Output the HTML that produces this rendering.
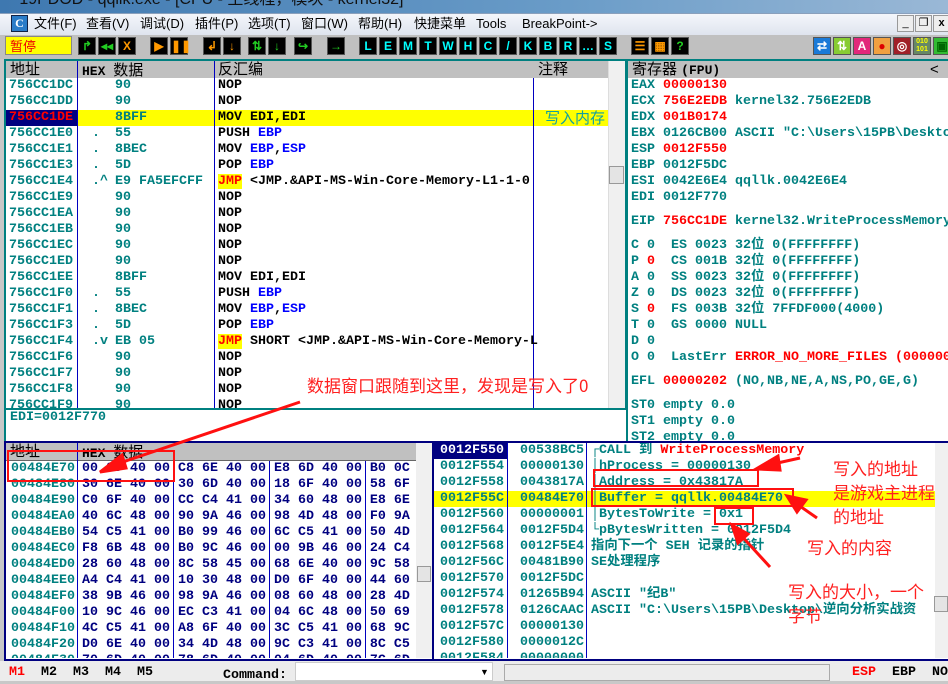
<!DOCTYPE html>
<html><head><meta charset="utf-8"><style>
*{margin:0;padding:0;box-sizing:border-box}
body{width:948px;height:681px;overflow:hidden;background:#c8c8c8;position:relative;font-family:"Liberation Sans","Noto Sans CJK SC",sans-serif}
.a{position:absolute}
pre,.m{font:bold 13.33px/16px "Liberation Mono","Noto Sans CJK SC",monospace;position:absolute;white-space:pre;margin:0}
.t{color:#008080}.r{color:#ff0000}.k{color:#000}.b{color:#0000ff}.n{color:#000080}
.hd{background:#c0c0c0;font:15px/17px "Liberation Sans","Noto Sans CJK SC",sans-serif;color:#000}
.btn{position:absolute;top:37px;width:18px;height:18px;background:#000;border:1px solid #555;color:#0ff;font:bold 12px/16px "Liberation Sans",sans-serif;text-align:center}
.vl{position:absolute;width:1px;background:#0000c0}
.ann{position:absolute;color:#ff2020;font:17px/20px "Noto Sans CJK SC",sans-serif;white-space:nowrap}
.box{position:absolute;border:2px solid #ff1010}
.hx{position:absolute;font:bold 13px/17px 'Liberation Mono','Noto Sans CJK SC',monospace}
.hx span{font:normal 15px/17px 'Noto Sans CJK SC',sans-serif}
</style></head><body>
<div class="a" style="left:0;top:0;width:948px;height:13px;background:linear-gradient(90deg,#3e78b0,#6a9cc8 60%,#9ab8d6);overflow:hidden"><div class="a" style="left:6px;top:-9px;color:#111;font:16px/18px 'Liberation Sans','Noto Sans CJK SC',sans-serif;white-space:nowrap">&nbsp;&nbsp;&nbsp;19PDOD - qqllk.exe - [CPU - 主线程，模块 - kernel32]</div></div>
<div class="a" style="left:0;top:13px;width:948px;height:22px;background:linear-gradient(#f4f6fb,#dfe4ee);border-top:1px solid #8aa0bc"></div>
<div class="a" style="left:11px;top:15px;width:17px;height:17px;background:#2a7cc8;border:1px solid #124;color:#fff;font:bold 12px/15px 'Liberation Serif',serif;text-align:center">C</div>
<div class="a" style="left:34px;top:15px;font:13px/18px 'Liberation Sans','Noto Sans CJK SC',sans-serif;color:#000;white-space:nowrap">
<span class="a" style="left:0">文件(F)</span><span class="a" style="left:52px">查看(V)</span><span class="a" style="left:106px">调试(D)</span><span class="a" style="left:161px">插件(P)</span><span class="a" style="left:214px">选项(T)</span><span class="a" style="left:267px">窗口(W)</span><span class="a" style="left:324px">帮助(H)</span><span class="a" style="left:380px">快捷菜单</span><span class="a" style="left:442px">Tools</span><span class="a" style="left:488px">BreakPoint-&gt;</span></div>
<div class="a" style="left:897px;top:15px;width:17px;height:17px;border:1px solid #999;background:#eee;font:11px/15px sans-serif;text-align:center">_</div>
<div class="a" style="left:915px;top:15px;width:17px;height:17px;border:1px solid #999;background:#eee;font:11px/15px sans-serif;text-align:center">❐</div>
<div class="a" style="left:933px;top:15px;width:17px;height:17px;border:1px solid #999;background:#eee;font:bold 11px/15px sans-serif;text-align:center">x</div>
<div class="a" style="left:0;top:35px;width:948px;height:24px;background:#c0c0c0"></div>
<div class="a" style="left:5px;top:36px;width:67px;height:19px;background:#ffff00;border:1px solid #888;color:#e00;font:13px/17px 'Noto Sans CJK SC',sans-serif;padding-left:4px">暂停</div>
<div class="btn" style="left:78px;color:#2c2">↱</div><div class="btn" style="left:98px;color:#2c2">◂◂</div><div class="btn" style="left:118px;color:#f90">X</div>
<div class="btn" style="left:150px;color:#f90">▶</div><div class="btn" style="left:170px;color:#f90">❚❚</div>
<div class="btn" style="left:203px;color:#f90">↲</div><div class="btn" style="left:223px;color:#f90">↓</div>
<div class="btn" style="left:248px;color:#2c2">⇅</div><div class="btn" style="left:268px;color:#2c2">↓</div>
<div class="btn" style="left:294px;color:#2c2">↪</div><div class="btn" style="left:327px;color:#2c2">→</div>
<div class="btn" style="left:359px">L</div><div class="btn" style="left:379px">E</div><div class="btn" style="left:399px">M</div><div class="btn" style="left:419px">T</div><div class="btn" style="left:439px">W</div><div class="btn" style="left:459px">H</div><div class="btn" style="left:479px">C</div><div class="btn" style="left:499px">/</div><div class="btn" style="left:519px">K</div><div class="btn" style="left:539px">B</div><div class="btn" style="left:559px">R</div><div class="btn" style="left:579px">…</div><div class="btn" style="left:599px">S</div>
<div class="btn" style="left:631px;color:#f90">☰</div><div class="btn" style="left:651px;color:#f90">▦</div><div class="btn" style="left:671px;color:#2c2">?</div>
<div class="btn" style="left:813px;background:#1a7ad8;color:#fff">⇄</div><div class="btn" style="left:833px;background:#8c3;color:#fff">⇅</div><div class="btn" style="left:853px;background:#e2287a;color:#fff">A</div><div class="btn" style="left:873px;background:#f0a040;color:#d00">●</div><div class="btn" style="left:893px;background:#a02028;color:#fff">◎</div><div class="btn" style="left:913px;background:#686;color:#ff0;font-size:7px;line-height:8px">010<br>101</div><div class="btn" style="left:933px;background:#3b3;color:#060">▣</div>

<div class="a" style="left:4px;top:59px;width:623px;height:351px;background:#fff;border:2px solid #008080;border-bottom:none"></div>
<div class="a hd" style="left:6px;top:61px;width:602px;height:17px"></div>
<div class="a hd" style="left:10px;top:61px">地址</div>
<div class="hx" style="left:82px;top:61px">HEX <span>数据</span></div>
<div class="a hd" style="left:218px;top:61px">反汇编</div>
<div class="a hd" style="left:538px;top:61px">注释</div>
<div class="a" style="left:608px;top:61px;width:17px;height:348px;background:#f0f0f0;border-left:1px solid #ddd"></div>
<div class="a" style="left:609px;top:166px;width:15px;height:18px;background:#e4e4e4;border:1px solid #999"></div>
<div class="a" style="left:6px;top:110px;width:602px;height:16px;background:#ffff00"></div>
<div class="a" style="left:6px;top:110px;width:71px;height:16px;background:#000080"></div>
<div class="vl" style="left:77px;top:61px;height:348px"></div>
<div class="vl" style="left:214px;top:61px;height:348px"></div>
<div class="vl" style="left:533px;top:78px;height:331px"></div>
<div class="a" style="left:6px;top:78px;width:602px;height:331px;overflow:hidden">
<pre class="t" style="left:3px;top:0">756CC1DC
756CC1DD
<span class="r">756CC1DE</span>
756CC1E0
756CC1E1
756CC1E3
756CC1E4
756CC1E9
756CC1EA
756CC1EB
756CC1EC
756CC1ED
756CC1EE
756CC1F0
756CC1F1
756CC1F3
756CC1F4
756CC1F6
756CC1F7
756CC1F8
756CC1F9</pre>
<pre class="t" style="left:86px;top:0"> 
 
 
.
.
.
.^
 
 
 
 
 
 
.
.
.
.v</pre>
<pre class="t" style="left:109px;top:0">90
90
8BFF
55
8BEC
5D
E9 FA5EFCFF
90
90
90
90
90
8BFF
55
8BEC
5D
EB 05
90
90
90
90</pre>
<pre class="k" style="left:212px;top:0">NOP
NOP
MOV EDI,EDI
PUSH <span class="b">EBP</span>
MOV <span class="b">EBP</span>,<span class="b">ESP</span>
POP <span class="b">EBP</span>
<span class="r" style="background:#ff0">JMP</span> &lt;JMP.&amp;API-MS-Win-Core-Memory-L1-1-0
NOP
NOP
NOP
NOP
NOP
MOV EDI,EDI
PUSH <span class="b">EBP</span>
MOV <span class="b">EBP</span>,<span class="b">ESP</span>
POP <span class="b">EBP</span>
<span class="r" style="background:#ff0">JMP</span> SHORT &lt;JMP.&amp;API-MS-Win-Core-Memory-L
NOP
NOP
NOP
NOP</pre>
<div class="a" style="left:539px;top:32px;color:#10a0a0;font:15px/16px 'Noto Sans CJK SC',sans-serif;white-space:nowrap">写入内存</div>
</div>

<div class="a" style="left:626px;top:59px;width:322px;height:382px;background:#fff;border-left:2px solid #008080;border-top:2px solid #008080"></div>
<div class="a hd" style="left:628px;top:61px;width:320px;height:17px;padding-left:4px">寄存器 <span style="font:bold 13px 'Liberation Mono',monospace">(FPU)</span><span class="a" style="left:302px;top:0">&lt;</span></div>
<div class="a" style="left:628px;top:78px;width:320px;height:363px;overflow:hidden">
<pre class="t" style="left:3px;top:0">EAX <span class="r">00000130</span>
ECX <span class="r">756E2EDB</span> kernel32.756E2EDB
EDX <span class="r">001B0174</span>
EBX 0126CB00 ASCII "C:\Users\15PB\Desktop
ESP <span class="r">0012F550</span>
EBP 0012F5DC
ESI 0042E6E4 qqllk.0042E6E4
EDI 0012F770</pre>
<pre class="t" style="left:3px;top:136px">EIP <span class="r">756CC1DE</span> kernel32.WriteProcessMemory</pre>
<pre class="t" style="left:3px;top:160px">C 0  ES 0023 32位 0(FFFFFFFF)
P <span class="r">0</span>  CS 001B 32位 0(FFFFFFFF)
A 0  SS 0023 32位 0(FFFFFFFF)
Z 0  DS 0023 32位 0(FFFFFFFF)
S <span class="r">0</span>  FS 003B 32位 7FFDF000(4000)
T 0  GS 0000 NULL
D 0
O 0  LastErr <span class="r">ERROR_NO_MORE_FILES (00000012)</span></pre>
<pre class="t" style="left:3px;top:296px">EFL <span class="r">00000202</span> (NO,NB,NE,A,NS,PO,GE,G)</pre>
<pre class="t" style="left:3px;top:320px">ST0 empty 0.0
ST1 empty 0.0
ST2 empty 0.0</pre>
</div>

<div class="a" style="left:4px;top:408px;width:622px;height:33px;background:#fff;border-left:2px solid #008080;border-top:2px solid #008080"></div>
<pre class="t" style="left:10px;top:410px">EDI=0012F770</pre>

<div class="a" style="left:4px;top:441px;width:430px;height:220px;background:#fff;border:2px solid #000080"></div>
<div class="a hd" style="left:6px;top:443px;width:410px;height:18px;border-bottom:1px solid #666"></div>
<div class="a hd" style="left:10px;top:443px">地址</div>
<div class="hx" style="left:82px;top:443px">HEX <span>数据</span></div>
<div class="a" style="left:416px;top:443px;width:16px;height:215px;background:#f0f0f0"></div>
<div class="a" style="left:417px;top:566px;width:14px;height:16px;background:#e4e4e4;border:1px solid #999"></div>
<div class="vl" style="left:77px;top:443px;height:215px"></div>
<div class="vl" style="left:173px;top:461px;height:197px"></div>
<div class="vl" style="left:269px;top:461px;height:197px"></div>
<div class="vl" style="left:365px;top:461px;height:197px"></div>
<div class="a" style="left:6px;top:461px;width:410px;height:197px;overflow:hidden">
<pre class="t" style="left:5px;top:0">00484E70
00484E80
00484E90
00484EA0
00484EB0
00484EC0
00484ED0
00484EE0
00484EF0
00484F00
00484F10
00484F20
00484F30</pre>
<pre class="n" style="left:76px;top:0">00 0D 40 00 C8 6E 40 00 E8 6D 40 00 B0 0C
30 6E 40 00 30 6D 40 00 18 6F 40 00 58 6F
C0 6F 40 00 CC C4 41 00 34 60 48 00 E8 6E
40 6C 48 00 90 9A 46 00 98 4D 48 00 F0 9A
54 C5 41 00 B0 99 46 00 6C C5 41 00 50 4D
F8 6B 48 00 B0 9C 46 00 00 9B 46 00 24 C4
28 60 48 00 8C 58 45 00 68 6E 40 00 9C 58
A4 C4 41 00 10 30 48 00 D0 6F 40 00 44 60
38 9B 46 00 98 9A 46 00 08 60 48 00 28 4D
10 9C 46 00 EC C3 41 00 04 6C 48 00 50 69
4C C5 41 00 A8 6F 40 00 3C C5 41 00 68 9C
D0 6E 40 00 34 4D 48 00 9C C3 41 00 8C C5
70 6D 40 00 78 6D 40 00 04 6D 40 00 7C 6D</pre>
</div>

<div class="a" style="left:432px;top:441px;width:516px;height:220px;background:#fff;border:2px solid #000080;border-right:none"></div>
<div class="a" style="left:434px;top:443px;width:73px;height:16px;background:#000080"></div>
<div class="a" style="left:434px;top:491px;width:501px;height:16px;background:#ffff00"></div>
<div class="vl" style="left:507px;top:443px;height:215px"></div>
<div class="vl" style="left:586px;top:443px;height:215px"></div>
<div class="a" style="left:935px;top:443px;width:13px;height:215px;background:#f0f0f0"></div>
<div class="a" style="left:934px;top:596px;width:14px;height:16px;background:#e4e4e4;border:1px solid #999"></div>
<div class="a" style="left:434px;top:443px;width:501px;height:215px;overflow:hidden">
<pre class="t" style="left:6px;top:0"><span style="color:#fff">0012F550</span>
0012F554
0012F558
0012F55C
0012F560
0012F564
0012F568
0012F56C
0012F570
0012F574
0012F578
0012F57C
0012F580
0012F584</pre>
<pre class="t" style="left:86px;top:0">00538BC5
00000130
0043817A
00484E70
00000001
0012F5D4
0012F5E4
00481B90
0012F5DC
01265B94
0126CAAC
00000130
0000012C
00000000</pre>
<pre class="t" style="left:157px;top:0">┌CALL 到 <span class="r">WriteProcessMemory</span>
│hProcess = 00000130
│Address = 0x43817A
│Buffer = qqllk.00484E70
│BytesToWrite = 0x1
└pBytesWritten = 0012F5D4
指向下一个 SEH 记录的指针
SE处理程序

ASCII "纪B"
ASCII "C:\Users\15PB\Desktop\逆向分析实战资</pre>
</div>

<div class="a" style="left:0;top:661px;width:948px;height:20px;background:#ececec"></div>
<pre style="left:9px;top:665px;color:#000"><span class="r">M1</span>  M2  M3  M4  M5</pre>
<pre style="left:223px;top:668px;color:#000">Command:</pre>
<div class="a" style="left:295px;top:662px;width:198px;height:19px;background:#fff;border:1px solid #ccc"></div>
<div class="a" style="left:480px;top:667px;font:9px sans-serif">▼</div>
<div class="a" style="left:504px;top:664px;width:326px;height:17px;border:1px solid #aaa;background:#ececec"></div>
<pre style="left:852px;top:665px;color:#000"><span class="r">ESP</span>  EBP  NONE</pre>

<div class="box" style="left:7px;top:450px;width:168px;height:32px"></div>
<div class="box" style="left:593px;top:469px;width:166px;height:18px"></div>
<div class="box" style="left:591px;top:488px;width:203px;height:19px"></div>
<div class="box" style="left:714px;top:507px;width:40px;height:18px"></div>
<div class="ann" style="left:307px;top:375px">数据窗口跟随到这里，发现是写入了0</div>
<div class="ann" style="left:833px;top:458px">写入的地址</div>
<div class="ann" style="left:833px;top:482px">是游戏主进程</div>
<div class="ann" style="left:833px;top:506px">的地址</div>
<div class="ann" style="left:807px;top:537px">写入的内容</div>
<div class="ann" style="left:788px;top:581px">写入的大小，一个</div>
<div class="ann" style="left:788px;top:605px">字节</div>
<svg class="a" style="left:0;top:0" width="948" height="681">
<g stroke="#ff1010" stroke-width="3" fill="#ff1010">
<line x1="300" y1="402" x2="108" y2="467"/>
<polygon points="100,472 122,455 126,468"/>
<line x1="800" y1="458" x2="764" y2="466"/>
<polygon points="756,469 778,456 780,470"/>
<line x1="817" y1="518" x2="794" y2="502"/>
<polygon points="787,496 806,500 797,512"/>
<line x1="770" y1="567" x2="738" y2="532"/>
<polygon points="732,525 748,534 738,543"/>
</g></svg>
</body></html>
